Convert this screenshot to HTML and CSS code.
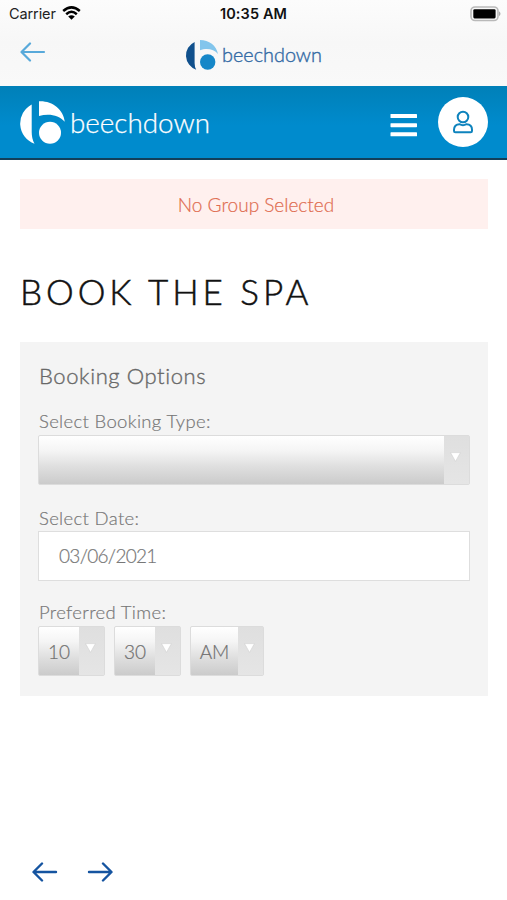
FILE: index.html
```html
<!DOCTYPE html>
<html lang="en">
<head>
<meta charset="utf-8">
<meta name="viewport" content="width=device-width, initial-scale=1">
<title>Book the Spa</title>
<link rel="stylesheet" href="styles.css">
</head>
<body>
<header class="app-head">
  <div class="status">
    <div class="carrier"><span>Carrier</span>
      <svg width="19" height="14" viewBox="0 0 19 14" fill="none" stroke="#000" stroke-width="2.5"><path d="M1.2 5Q9.5-2.2 17.8 5M4.2 8.2Q9.5 3.4 14.8 8.2"/><path d="M9.5 13.7L6.2 10.5Q9.5 7.8 12.8 10.5Z" fill="#000" stroke="none"/></svg>
    </div>
    <div class="clock">10:35 AM</div>
    <svg class="battery" width="31" height="16" viewBox="0 0 31 16"><rect x="1" y="1" width="27" height="13.5" rx="4" fill="#f8f8f8" stroke="#b9b9b9" stroke-width="1.6"/><rect x="3.3" y="3.2" width="22.3" height="9.2" rx="1.3"/><path d="M29 5.2Q32 7.7 29 10.2Z" fill="#aaa"/></svg>
  </div>
  <div class="nav">
    <svg class="back" width="26" height="20" viewBox="0 0 26 20" fill="none" stroke="#58a9da" stroke-width="2.2" stroke-linecap="round" stroke-linejoin="round"><path d="M24 10H2M10 1.5L1.5 10L10 18.5"/></svg>
    <svg class="app-logo" width="138" height="32" viewBox="0 0 138 32">
      <path d="M9.6 2.9A15 15 0 0 0 11.2 30.7Q9.6 28 9.6 24Z" fill="#10508c"/>
      <path d="M15 1C24 1 31.5 6.5 33 15C29 9.7 21 8.7 15 11.3Z" fill="#82c5ec"/>
      <circle cx="22.7" cy="23" r="7.7" fill="#1687c8"/>
      <text x="37" y="23" textLength="100" lengthAdjust="spacingAndGlyphs" class="small-word">beechdown</text>
    </svg>
  </div>
</header>
<div class="brand-bar">
  <svg class="brand" width="192" height="46" viewBox="0 0 192 46" fill="#fff">
    <path d="M11.7 4.5A21.5 21.5 0 0 0 14.5 43.8Q11.7 39 11.7 32Z"/>
    <path d="M19 1.2C32 .5 43.5 9 44.8 21.8C39 14.5 28 13.2 19 16Z"/>
    <circle cx="30" cy="32.8" r="11"/>
    <text x="50" y="33" textLength="140" lengthAdjust="spacingAndGlyphs" class="word">beechdown</text>
  </svg>
  <svg class="burger" width="28" height="24" viewBox="0 0 28 24" fill="#fff"><rect x=".5" y="1" width="26.5" height="4" rx=".6"/><rect x=".5" y="10.2" width="26.5" height="4" rx=".6"/><rect x=".5" y="19.3" width="26.5" height="4" rx=".6"/></svg>
  <div class="avatar">
    <svg width="20" height="24" viewBox="0 0 20 24" fill="none" stroke="#0e83bd" stroke-width="2"><circle cx="10" cy="7" r="5.3"/><path d="M6.5 14.2Q10 16.2 13.5 14.2C17 14.2 19 16.5 19 19.8V21Q19 22.3 17.6 22.3H2.4Q1 22.3 1 21V19.8C1 16.5 3 14.2 6.5 14.2Z"/></svg>
  </div>
</div>
<main>
  <div class="alert"><span>No Group Selected</span></div>
  <h1>BOOK THE SPA</h1>
  <section class="panel">
    <h2>Booking Options</h2>
    <div class="label l-type">Select Booking Type:</div>
    <div class="select wide"><span class="value"></span><span class="arrow"><svg width="11" height="10" viewBox="0 0 10 9"><path d="M.5 .5H9.5L5 8.5Z"/></svg></span></div>
    <div class="label l-date">Select Date:</div>
    <div class="date">03/06/2021</div>
    <div class="label l-time">Preferred Time:</div>
    <div class="times">
      <div class="select"><span class="value">10</span><span class="arrow"><svg width="11" height="10" viewBox="0 0 10 9"><path d="M.5 .5H9.5L5 8.5Z"/></svg></span></div>
      <div class="select"><span class="value">30</span><span class="arrow"><svg width="11" height="10" viewBox="0 0 10 9"><path d="M.5 .5H9.5L5 8.5Z"/></svg></span></div>
      <div class="select am"><span class="value">AM</span><span class="arrow"><svg width="11" height="10" viewBox="0 0 10 9"><path d="M.5 .5H9.5L5 8.5Z"/></svg></span></div>
    </div>
  </section>
</main>
<footer>
  <svg width="26" height="20" viewBox="0 0 26 20"><path d="M24 10H2M10 1.5L1.5 10L10 18.5"/></svg>
  <svg width="26" height="20" viewBox="0 0 26 20"><path d="M2 10H24M16 1.5L24.5 10L16 18.5"/></svg>
</footer>
</body>
</html>
```
FILE: styles.css
```css
* { box-sizing: border-box; }
body { margin: 0; height: 900px; display: flex; flex-direction: column; background: #fff; color: #777; font-family: Lato, "Open Sans", sans-serif; font-weight: 300; font-variant-ligatures: none; }
svg { display: block; flex: none; }
.app-head { height: 86px; background: linear-gradient(#fcfcfc, #f7f7f7 50%, #f9f9f9); }
.status { height: 28px; display: grid; grid-template-columns: 1fr auto 1fr; align-items: center; padding: 0 6px 0 9px; font: 400 14.5px/28px Inter, sans-serif; color: #222; }
.carrier { display: flex; align-items: center; gap: 6px; }
.carrier span { letter-spacing: -.1px; }
.carrier svg { margin-top: -2px; }
.clock { font-weight: 600; font-size: 14.5px; letter-spacing: .1px; margin-left: -3px; color: #111; }
.battery { justify-self: end; margin-top: -1px; }
.nav { height: 58px; display: grid; grid-template-columns: 1fr auto 1fr; align-items: start; padding: 10px 20px 0; }
.back { margin-top: 4px; }
.app-logo { margin-top: 1px; }
.small-word { font: 300 20px Lato, sans-serif; fill: #346ba5; stroke: #346ba5; stroke-width: .4px; }
.brand-bar { height: 74px; display: flex; align-items: center; padding: 0 19px 0 20px; background: linear-gradient(#0080b8, #008bcd 55%, #008bcd); border-bottom: 2px solid #123f5a; }
.brand { margin-top: 1px; }
.word { font: 300 27px Lato, sans-serif; stroke: #fff; stroke-width: .25px; }
.burger { margin-left: auto; margin-top: 6px; }
.avatar { width: 50px; height: 50px; margin-left: 20px; border-radius: 50%; background: #fff; display: flex; align-items: center; justify-content: center; }
main { padding: 19px 19px 0 20px; }
.alert { height: 50px; background: #fff0ee; color: #e06c50; font-size: 19px; line-height: 51px; text-align: center; padding-left: 4px; -webkit-text-stroke: .2px; }
h1 { margin: 38px 0 0; height: 75px; font-size: 35px; line-height: 48px; font-weight: 300; letter-spacing: 3.95px; color: #111; -webkit-text-stroke: .5px; }
.panel { height: 354px; background: #f4f4f4; padding: 18px 18px 0 18px; }
h2 { margin: 0 0 0 1px; height: 47px; font-size: 22px; line-height: 32px; font-weight: 300; letter-spacing: .6px; color: #686868; -webkit-text-stroke: .35px; }
.label { font-size: 18.5px; line-height: 28px; height: 28px; padding-left: 1px; letter-spacing: .33px; -webkit-text-stroke: .2px; }
.l-date { height: 27px; margin-top: 19px; }
.l-time { height: 27px; margin-top: 18px; line-height: 26px; }
.select { width: 67px; height: 50px; display: flex; border: 1px solid #dcdcdc; border-radius: 2px; background: linear-gradient(#fff, #f5f5f5 30%, #dedede 65%, #cbcbcb); }
.select.wide { width: auto; }
.value { flex: 1; text-align: center; font-size: 19px; line-height: 49px; color: #707070; -webkit-text-stroke: .2px; }
.arrow { width: 25px; padding: 16px 0 0 6px; background: linear-gradient(#dfdfdf, #e5e5e5); }
.arrow path { fill: #fff; stroke: #cecece; stroke-width: .5; }
.date { height: 50px; border: 1px solid #dedede; background: #fff; padding-left: 20px; font-size: 19px; line-height: 48px; letter-spacing: -.7px; -webkit-text-stroke: .2px; }
.times { display: flex; gap: 9px; }
.times .am { width: 74px; }
footer { margin-top: auto; height: 38px; display: flex; gap: 29px; padding-left: 32px; }
footer path { fill: none; stroke: #1554a0; stroke-width: 2.4; stroke-linecap: round; stroke-linejoin: round; }
```
